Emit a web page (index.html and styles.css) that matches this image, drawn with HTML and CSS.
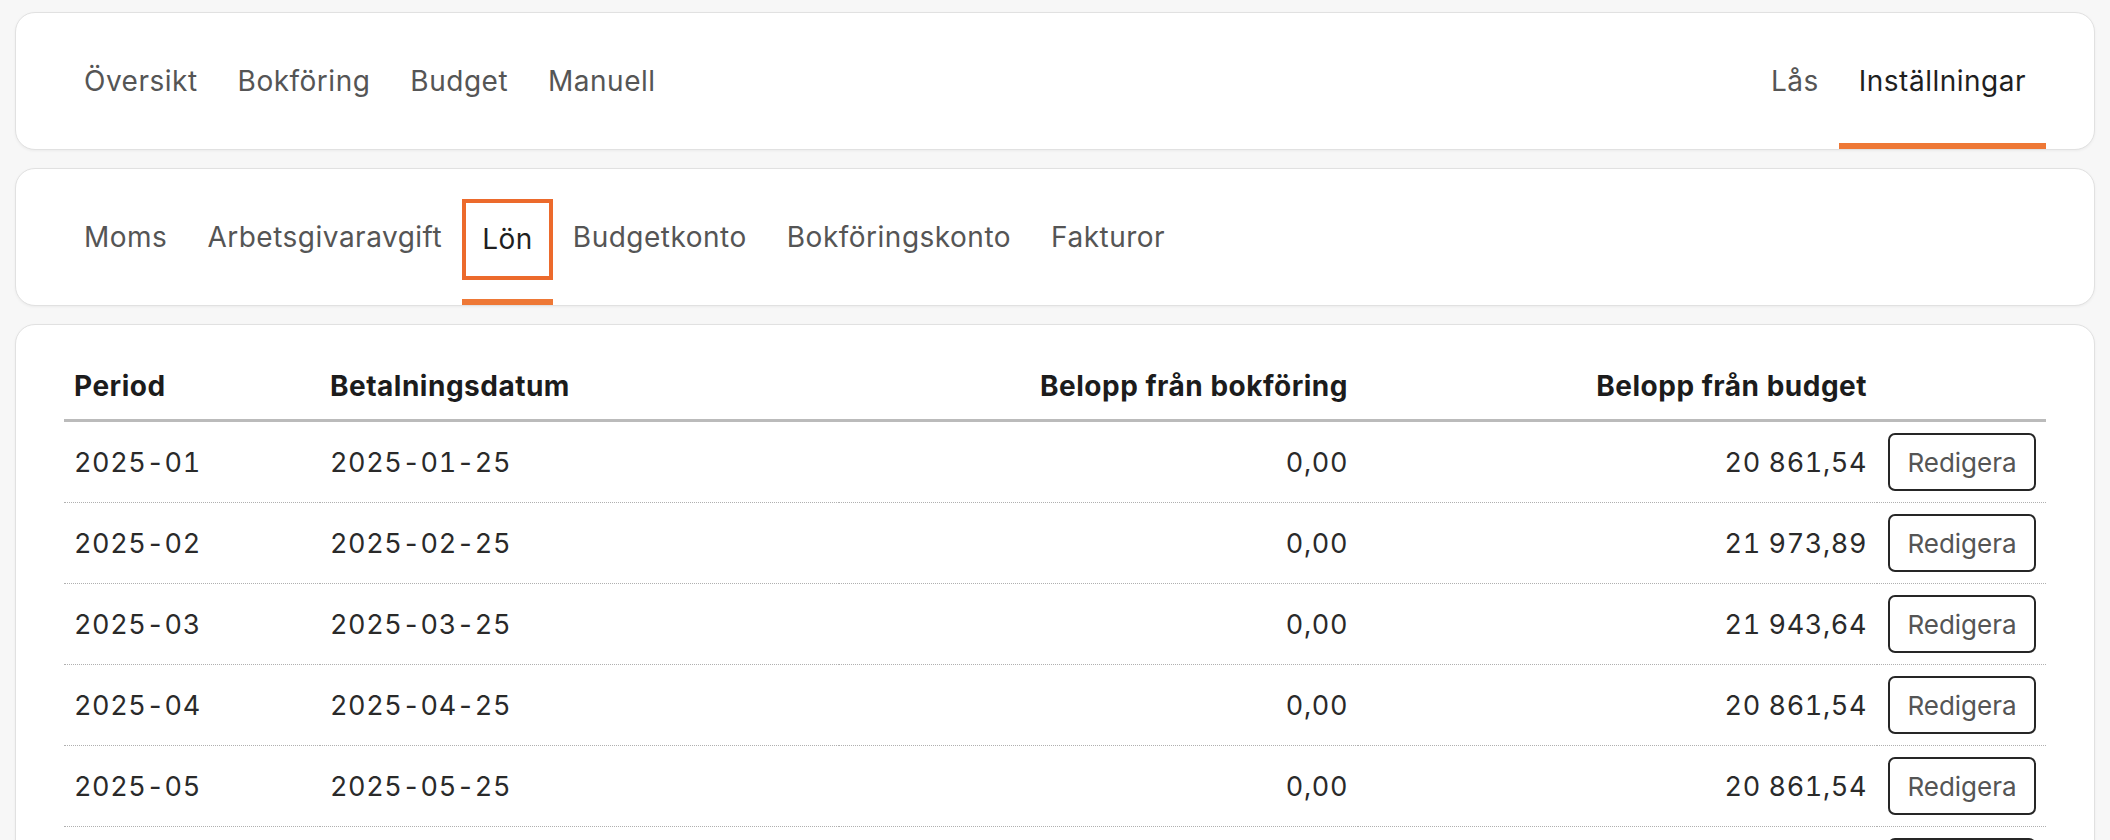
FILE: index.html
```html
<!DOCTYPE html>
<html lang="sv">
<head>
<meta charset="utf-8">
<title>Lön – Inställningar</title>
<link rel="stylesheet" href="styles.css">
</head>
<body>
<div class="page">
  <nav class="card tabs main-tabs">
    <ul class="tab-list">
      <li class="tab"><a href="#">Översikt</a></li>
      <li class="tab"><a href="#">Bokföring</a></li>
      <li class="tab"><a href="#">Budget</a></li>
      <li class="tab"><a href="#">Manuell</a></li>
    </ul>
    <ul class="tab-list">
      <li class="tab"><a href="#">Lås</a></li>
      <li class="tab active"><a href="#">Inställningar</a></li>
    </ul>
  </nav>

  <nav class="card tabs sub-tabs">
    <ul class="tab-list">
      <li class="tab"><a href="#">Moms</a></li>
      <li class="tab"><a href="#">Arbetsgivaravgift</a></li>
      <li class="tab active focused"><a href="#">Lön</a></li>
      <li class="tab"><a href="#">Budgetkonto</a></li>
      <li class="tab"><a href="#">Bokföringskonto</a></li>
      <li class="tab"><a href="#">Fakturor</a></li>
    </ul>
  </nav>

  <section class="card table-card">
    <table class="salary-table">
      <colgroup>
        <col class="c-period">
        <col class="c-date">
        <col class="c-amount">
        <col class="c-amount">
        <col class="c-action">
      </colgroup>
      <thead>
        <tr>
          <th>Period</th>
          <th>Betalningsdatum</th>
          <th class="num">Belopp från bokföring</th>
          <th class="num">Belopp från budget</th>
          <th></th>
        </tr>
      </thead>
      <tbody>
        <tr>
          <td class="mono">2025-01</td>
          <td class="mono">2025-01-25</td>
          <td class="num">0,00</td>
          <td class="num">20 861,54</td>
          <td class="action"><button class="btn" type="button">Redigera</button></td>
        </tr>
        <tr>
          <td class="mono">2025-02</td>
          <td class="mono">2025-02-25</td>
          <td class="num">0,00</td>
          <td class="num">21 973,89</td>
          <td class="action"><button class="btn" type="button">Redigera</button></td>
        </tr>
        <tr>
          <td class="mono">2025-03</td>
          <td class="mono">2025-03-25</td>
          <td class="num">0,00</td>
          <td class="num">21 943,64</td>
          <td class="action"><button class="btn" type="button">Redigera</button></td>
        </tr>
        <tr>
          <td class="mono">2025-04</td>
          <td class="mono">2025-04-25</td>
          <td class="num">0,00</td>
          <td class="num">20 861,54</td>
          <td class="action"><button class="btn" type="button">Redigera</button></td>
        </tr>
        <tr>
          <td class="mono">2025-05</td>
          <td class="mono">2025-05-25</td>
          <td class="num">0,00</td>
          <td class="num">20 861,54</td>
          <td class="action"><button class="btn" type="button">Redigera</button></td>
        </tr>
        <tr>
          <td class="mono">2025-06</td>
          <td class="mono">2025-06-25</td>
          <td class="num">0,00</td>
          <td class="num">20 861,54</td>
          <td class="action"><button class="btn" type="button">Redigera</button></td>
        </tr>
      </tbody>
    </table>
  </section>
</div>
</body>
</html>
```

FILE: styles.css
```css
* {
  box-sizing: border-box;
}

html, body {
  margin: 0;
  padding: 0;
  background: #f7f7f7;
}

body {
  font-family: Inter, Lato, "Noto Sans", "Liberation Sans", sans-serif;
  color: #222;
  overflow: hidden;
}

.page {
  display: flex;
  flex-direction: column;
  gap: 18px;
  padding: 12px 15px 0 15px;
}

.card {
  background: #ffffff;
  border: 1px solid #e1e1e1;
  border-radius: 20px;
  box-shadow: 0 1px 3px rgba(0, 0, 0, 0.05);
}

/* Tabs */
.tabs {
  display: flex;
  justify-content: space-between;
  align-items: stretch;
  height: 138px;
  padding: 0 48px;
  overflow: hidden;
}

.tab-list {
  display: flex;
  align-items: stretch;
  list-style: none;
  margin: 0;
  padding: 0;
}

.tab {
  display: flex;
  align-items: center;
}

.tab a {
  display: flex;
  align-items: center;
  padding: 0 20px;
  font-size: 28px;
  letter-spacing: 0.5px;
  line-height: 1;
  color: #555555;
  text-decoration: none;
  white-space: nowrap;
}

.tab.active {
  box-shadow: inset 0 -6px 0 #ee7836;
}

.tab.active a {
  color: #1f1f1f;
}

.tab.focused a {
  height: 81px;
  margin-top: 4px;
  padding: 0 16px;
  border: 4px solid #ec6a2c;
}

/* Table card */
.table-card {
  padding: 29px 48px 0 48px;
  min-height: 600px;
}

.salary-table {
  width: 100%;
  border-collapse: collapse;
  table-layout: fixed;
}

.c-period { width: 256px; }
.c-date { width: 519px; }
.c-amount { width: 519px; }
.c-action { width: 169px; }

.salary-table th {
  padding: 16px 10px;
  line-height: 33px;
  font-size: 28px;
  font-weight: 700;
  letter-spacing: 0.5px;
  text-align: left;
  color: #1c1c1c;
  border-bottom: 3px solid #bbbbbb;
  white-space: nowrap;
}

.salary-table td {
  padding: 11px 10px;
  height: 81px;
  font-size: 27px;
  letter-spacing: 0.6px;
  color: #2a2a2a;
  border-bottom: 1px dotted #b0b0b0;
  vertical-align: middle;
  white-space: nowrap;
}

.salary-table .num {
  text-align: right;
}

.salary-table td.mono,
.salary-table td.num {
  font-variant-numeric: tabular-nums;
}

.salary-table td.action {
  text-align: right;
  padding-right: 10px;
  letter-spacing: 0;
}

.btn {
  width: 148px;
  height: 58px;
  background: #ffffff;
  border: 2px solid #262626;
  border-radius: 7px;
  font-family: Inter, Lato, "Noto Sans", "Liberation Sans", sans-serif;
  font-size: 26px;
  color: #555555;
  cursor: pointer;
  padding: 0;
}
```
